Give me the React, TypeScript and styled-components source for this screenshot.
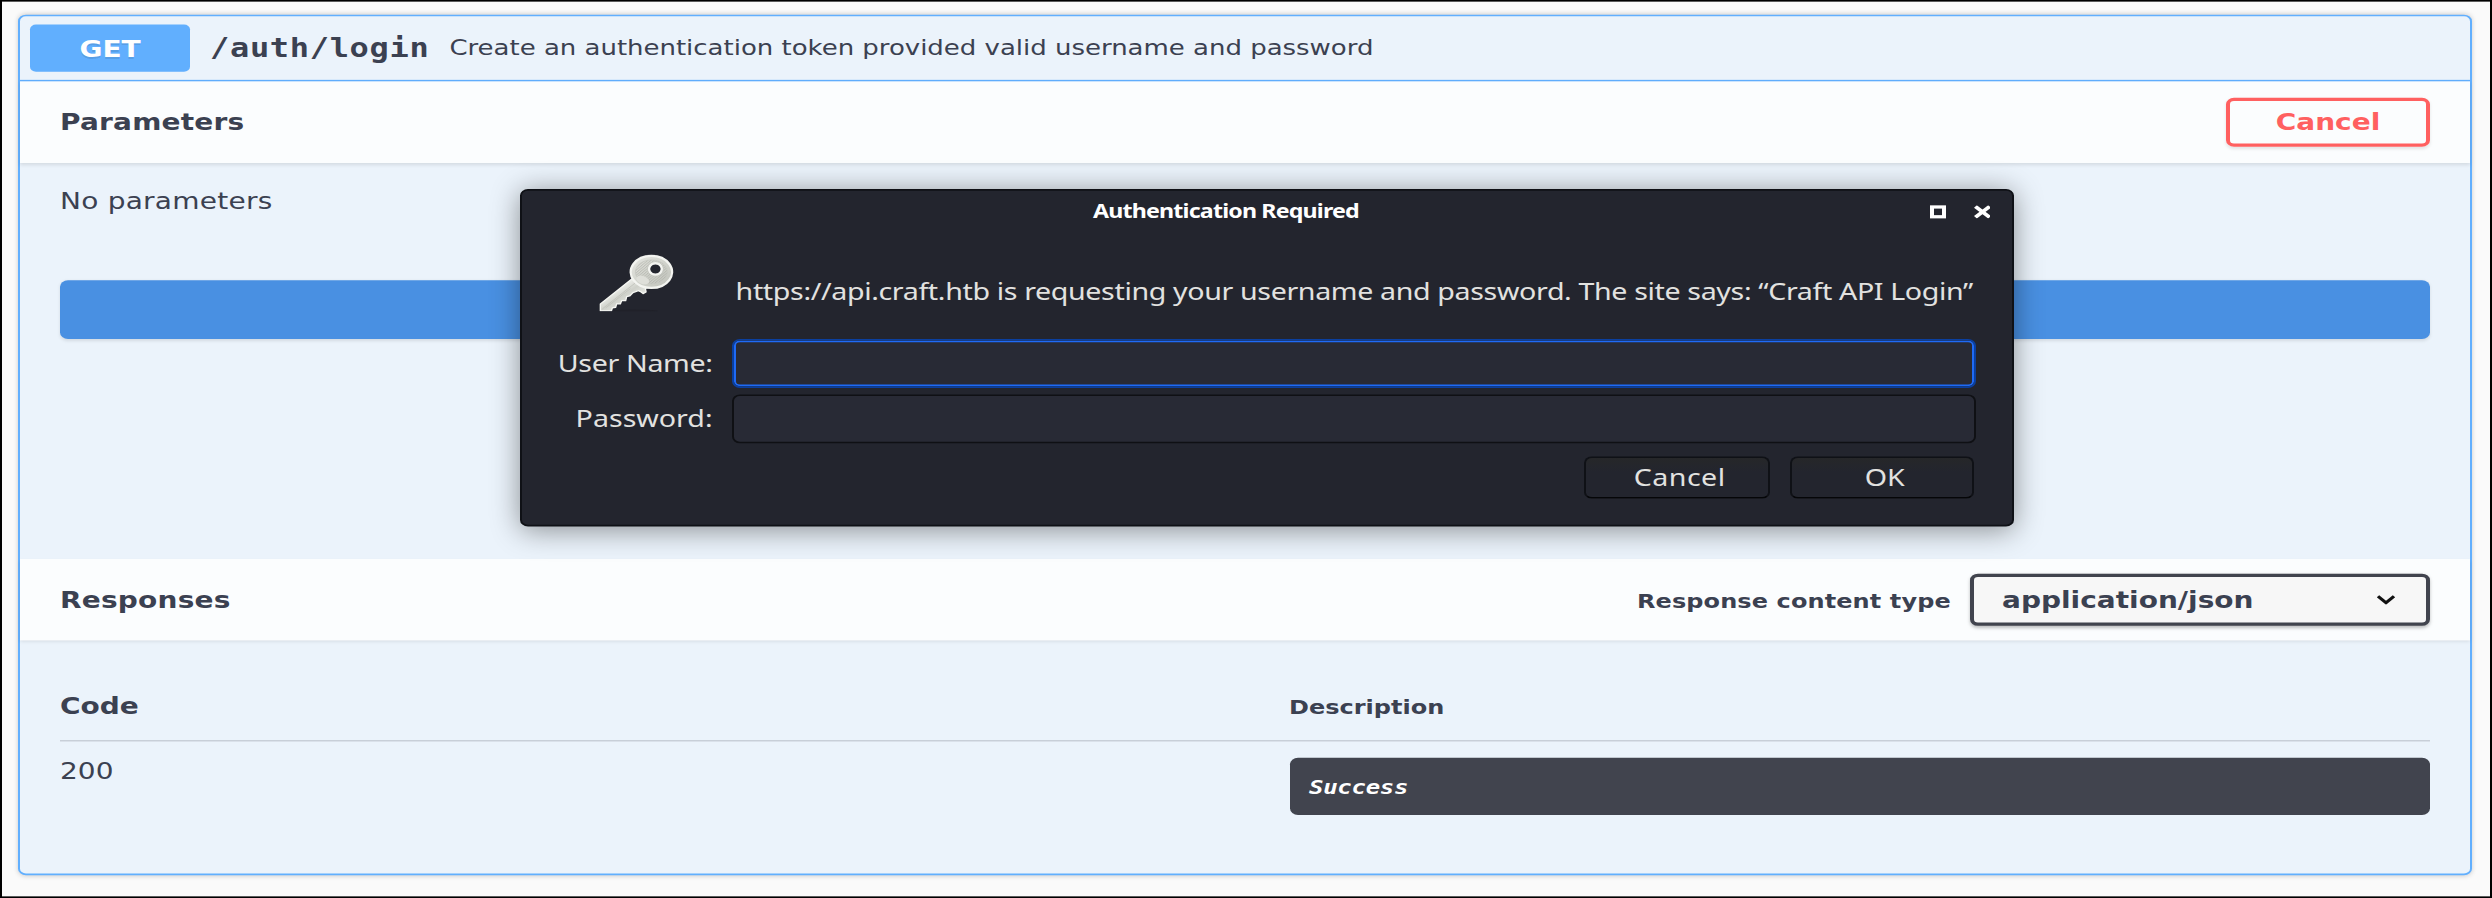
import React from 'react';
import styled, { createGlobalStyle, css } from 'styled-components';

const GlobalStyle = createGlobalStyle`
  *, *::before, *::after { box-sizing: border-box; }
  html, body { margin: 0; padding: 0; background: #fafafa; overflow: hidden; }
  button, input { margin: 0; font: inherit; outline: none; }
`;

const ink = '#3b4151';
const blue = '#61affe';
const sans = "'DejaVu Sans', sans-serif";
const mono = "'DejaVu Sans Mono', monospace";
const ui = "'Noto Sans', sans-serif";

const Viewport = styled.div`
  width: 2492px;
  height: 898px;
  overflow: hidden;
`;

/* The page is laid out on a 1246x551 grid and stretched to the viewport. */
const Page = styled.main`
  position: relative;
  width: 1246px;
  height: 551px;
  padding: 8px 9px 0 8px;
  border: 1px solid #000;
  background: #fafafa;
  color: ${ink};
  font-family: ${sans};
  font-size: 14px;
  white-space: nowrap;
  transform: scale(2, 1.62976);
  transform-origin: 0 0;
`;

const OpBlock = styled.section`
  display: flex;
  flex-direction: column;
  height: 528px;
  border: 1px solid ${blue};
  border-radius: 4px;
  background: #ebf3fb;
  box-shadow: 0 0 3px rgba(0, 0, 0, 0.19);
`;

const Summary = styled.header`
  display: flex;
  align-items: center;
  height: 40px;
  padding: 5px;
  border-bottom: 1px solid ${blue};
`;

const Method = styled.span`
  width: 80px;
  height: 29px;
  border-radius: 3px;
  background: ${blue};
  color: #fff;
  font-weight: 700;
  line-height: 30px;
  letter-spacing: -0.05px;
  text-align: center;
  text-shadow: 0 1px 0 rgba(0, 0, 0, 0.1);
`;

const Path = styled.span`
  width: 129.7px;
  padding: 0 10px;
  font: 700 16px/29px ${mono};
  letter-spacing: 0.34px;
`;

const SummaryText = styled.span`
  font-size: 13px;
  line-height: 28px;
  letter-spacing: -0.01px;
  padding-top: 1px;
`;

const SectionHeader = styled.div`
  display: flex;
  align-items: center;
  flex: none;
  height: 50px;
  padding: 0 20px;
  background: rgba(255, 255, 255, 0.8);
  box-shadow: 0 1px 2px rgba(0, 0, 0, 0.1);
`;

const Title = styled.h4`
  flex: 1;
  margin: 0;
  font-size: 14px;
  line-height: 20px;
  letter-spacing: 0.1px;
`;

const CancelTryOut = styled.button`
  width: 102px;
  height: 30px;
  padding: 0;
  border: 2px solid #ff6060;
  border-radius: 4px;
  background: transparent;
  box-shadow: 0 1px 2px rgba(0, 0, 0, 0.1);
  color: #ff6060;
  font-weight: 700;
  line-height: 25px;
`;

const Params = styled.div`
  display: flex;
  flex-direction: column;
  height: 243px;
  padding: 13px 20px 0;
`;

const Empty = styled.p`
  height: 58.6px;
  margin: 0;
  line-height: 20px;
  letter-spacing: 0.12px;
`;

const Execute = styled.div`
  height: 36px;
  border-radius: 4px;
  background: #4990e2;
  box-shadow: 0 1px 2px rgba(0, 0, 0, 0.1);
`;

const ContentTypeLabel = styled.label`
  margin-right: 9.6px;
  padding-top: 2px;
  font-size: 12px;
  font-weight: 700;
  line-height: 21px;
  letter-spacing: 0.05px;
`;

const Select = styled.div`
  display: flex;
  align-items: center;
  justify-content: space-between;
  width: 230px;
  height: 32px;
  padding: 0 15.3px 0 14px;
  border: 2px solid #41444e;
  border-radius: 4px;
  background: #f7f7f7;
  box-shadow: 0 1px 2px rgba(0, 0, 0, 0.25);
  font-weight: 700;
  line-height: 28px;
`;

const Responses = styled.div`
  flex: 1;
  padding: 30px 20px 0;
`;

const Row = styled.div<{ $head?: boolean }>`
  display: grid;
  grid-template-columns: 614.5px 1fr;
  ${p =>
    p.$head
      ? css`
          height: 32px;
          border-bottom: 1px solid rgba(59, 65, 81, 0.2);
          font-weight: 700;
        `
      : css`
          padding-top: 10px;
        `}
`;

const Cell = styled.span<{ $small?: boolean }>`
  font-size: ${p => (p.$small ? 12 : 14)}px;
  line-height: ${p => (p.$small ? 22 : 20)}px;
`;

const Code = styled.span`
  font-size: 14px;
  line-height: 17px;
`;

const Markdown = styled.pre`
  height: 35px;
  margin: 0;
  padding: 0 10px;
  border-radius: 4px;
  background: #41444e;
  color: #fff;
  font: italic 700 12px/36px ${mono};
  letter-spacing: -0.14px;
`;

const Dialog = styled.div`
  position: absolute;
  left: 258.8px;
  top: 114.6px;
  width: 747.4px;
  height: 207px;
  padding: 0 18.6px 0 18px;
  border: 1px solid #0f1116;
  border-radius: 4px;
  background: #23252e;
  box-shadow: 0 2px 16px rgba(0, 0, 0, 0.42);
  color: #e2e2e0;
  font-family: ${ui};
  font-size: 14.3px;
`;

const TitleBar = styled.div`
  display: flex;
  align-items: center;
  height: 26px;
  margin-right: -7.8px;
`;

const DialogTitle = styled.span`
  flex: 1;
  padding-right: 17.7px;
  color: #fff;
  font-size: 11.6px;
  font-weight: 700;
  line-height: 26px;
  letter-spacing: -0.41px;
  text-align: center;
`;

const WindowButtons = styled.div`
  display: flex;
  gap: 13.5px;
`;

const MaxGlyph = styled.span`
  width: 8.5px;
  height: 8px;
  border: 2px solid #fff;
`;

const Message = styled.div`
  display: flex;
  height: 63.8px;
  padding-top: 12px;
`;

const KeySlot = styled.div`
  width: 89px;
  padding: 0 0 0 20px;
`;

const MessageText = styled.span`
  line-height: 47px;
  letter-spacing: -0.18px;
`;

const Field = styled.label<{ $focus?: boolean }>`
  display: flex;
  align-items: center;
  justify-content: flex-end;
  height: 34px;
  letter-spacing: ${p => (p.$focus ? '-0.17px' : '0')};
`;

const FieldLabel = styled.span`
  margin-right: 9.3px;
  line-height: 30px;
`;

const Input = styled.input<{ $focus?: boolean }>`
  width: 622px;
  height: 30px;
  padding: 0 8px;
  border: 1px solid ${p => (p.$focus ? '#0a3f9f' : '#0f1014')};
  border-radius: 4px;
  background: #282a35;
  color: inherit;
  ${p =>
    p.$focus &&
    css`
      box-shadow: inset 0 0 0 1px #1f6af5;
    `}
`;

const Actions = styled.div`
  display: flex;
  justify-content: flex-end;
  gap: 10.2px;
  padding: 6px 0.3px 0 0;
`;

const DialogButton = styled.button<{ $spacing: number }>`
  width: 92.4px;
  height: 25.4px;
  padding: 0 0 0 2.6px;
  border: 1px solid #0f1116;
  border-bottom-color: #050608;
  border-radius: 4px;
  background: linear-gradient(#262729, #23252e 35%);
  color: inherit;
  line-height: 22px;
  letter-spacing: ${p => p.$spacing}px;
`;

const CloseIcon = () => (
  <svg width="8.5" height="8" viewBox="0 0 8.5 8" preserveAspectRatio="none">
    <path d="M0.7 0.7 7.8 7.3M7.8 0.7 0.7 7.3" stroke="#fff" strokeWidth="2.1" />
  </svg>
);

const Chevron = () => (
  <svg width="10" height="6" viewBox="0 0 10 6">
    <path d="M1 0.8 5 4.8 9 0.8" fill="none" stroke="#111" strokeWidth="1.7" />
  </svg>
);

const KeyIcon = () => (
  <svg width="38.4" height="36.8" viewBox="55 50 230 180" preserveAspectRatio="none">
    <defs>
      <linearGradient id="bow" x1="0" y1="0" x2="1" y2="1">
        <stop offset="0" stopColor="#e6e7e2" />
        <stop offset="0.5" stopColor="#d2d4cd" />
        <stop offset="1" stopColor="#bfc1b9" />
      </linearGradient>
      <linearGradient id="blade" x1="0" y1="0" x2="1" y2="1">
        <stop offset="0.3" stopColor="#f2f3ef" />
        <stop offset="0.5" stopColor="#cfd1ca" />
        <stop offset="0.75" stopColor="#e9eae6" />
      </linearGradient>
      <pattern id="grain" width="6" height="6" patternUnits="userSpaceOnUse" patternTransform="rotate(-40)">
        <path d="M0 1.5H6" stroke="#a9aba3" strokeWidth="1.6" />
      </pattern>
    </defs>
    <ellipse cx="165" cy="225" rx="70" ry="4" fill="#202129" />
    <path
      d="M158 128 62 204V225H95L98 216 108 214 111 203 122 204 126 194 138 194 141 182 150 180 160 170 176 164 184 168 190 173 199 168 197 158 206 150Z"
      fill="url(#blade)"
      stroke="#f6f7f3"
      strokeWidth="4"
      strokeLinejoin="round"
    />
    <path d="M168 140 68 219M152 158 78 216" stroke="#c0c2bb" strokeWidth="2.5" />
    <path
      fillRule="evenodd"
      d="M215 60A62 48 0 1 1 214.9 60ZM227 82A19 17 0 1 0 227.1 82Z"
      fill="url(#bow)"
      stroke="#f3f4f0"
      strokeWidth="7"
    />
    <path
      fillRule="evenodd"
      d="M215 72A48 36 0 1 1 214.9 72ZM227 77A24 22 0 1 0 227.1 77Z"
      fill="url(#grain)"
      stroke="#c4c6bf"
      strokeWidth="2"
    />
    <ellipse cx="189" cy="132" rx="20" ry="12" fill="#dedfd9" transform="rotate(20 189 132)" />
  </svg>
);

export default function App() {
  return (
    <Viewport>
      <GlobalStyle />
      <Page>
        <OpBlock>
          <Summary>
            <Method>GET</Method>
            <Path>/auth/login</Path>
            <SummaryText>Create an authentication token provided valid username and password</SummaryText>
          </Summary>
          <SectionHeader>
            <Title>Parameters</Title>
            <CancelTryOut>Cancel</CancelTryOut>
          </SectionHeader>
          <Params>
            <Empty>No parameters</Empty>
            <Execute />
          </Params>
          <SectionHeader>
            <Title>Responses</Title>
            <ContentTypeLabel>Response content type</ContentTypeLabel>
            <Select>
              application/json
              <Chevron />
            </Select>
          </SectionHeader>
          <Responses>
            <Row $head>
              <Cell>Code</Cell>
              <Cell $small>Description</Cell>
            </Row>
            <Row>
              <Code>200</Code>
              <Markdown>Success</Markdown>
            </Row>
          </Responses>
        </OpBlock>

        <Dialog role="dialog">
          <TitleBar>
            <DialogTitle>Authentication Required</DialogTitle>
            <WindowButtons>
              <MaxGlyph />
              <CloseIcon />
            </WindowButtons>
          </TitleBar>
          <Message>
            <KeySlot>
              <KeyIcon />
            </KeySlot>
            <MessageText>
              https://api.craft.htb is requesting your username and password. The site says: “Craft API Login”
            </MessageText>
          </Message>
          <Field $focus>
            <FieldLabel>User Name:</FieldLabel>
            <Input $focus />
          </Field>
          <Field>
            <FieldLabel>Password:</FieldLabel>
            <Input type="password" />
          </Field>
          <Actions>
            <DialogButton $spacing={0.22}>Cancel</DialogButton>
            <DialogButton $spacing={0}>OK</DialogButton>
          </Actions>
        </Dialog>
      </Page>
    </Viewport>
  );
}
